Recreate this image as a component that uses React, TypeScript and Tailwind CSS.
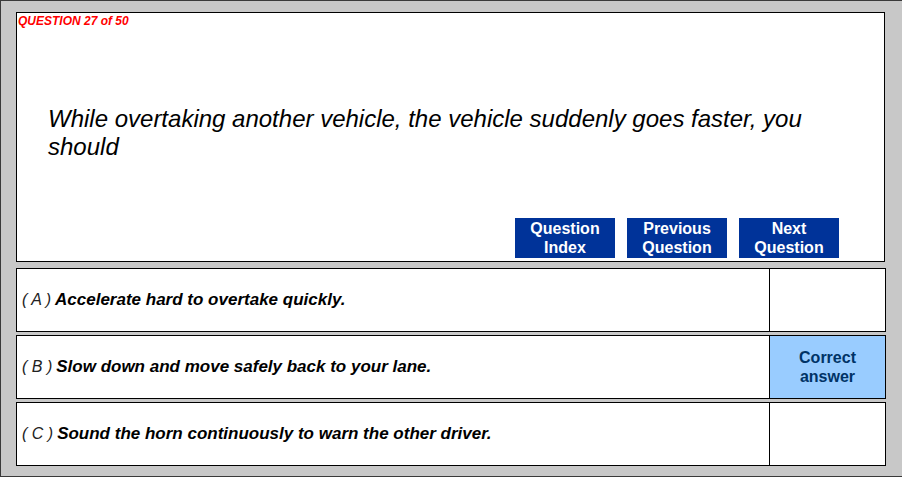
import React from 'react';

const options = [
  { key: 'A', text: 'Accelerate hard to overtake quickly.', correct: false },
  { key: 'B', text: 'Slow down and move safely back to your lane.', correct: true },
  { key: 'C', text: 'Sound the horn continuously to warn the other driver.', correct: false },
];

function NavButton({ top, bottom }: { top: string; bottom: string }) {
  return (
    <button
      type="button"
      className="w-[100px] h-[40px] bg-[#003399] text-white font-bold text-[16px] leading-[19px] flex flex-col items-center justify-center"
    >
      <span>{top}</span>
      <span>{bottom}</span>
    </button>
  );
}

export default function App() {
  return (
    <div
      className="w-[903px] h-[477px] bg-[#c8c8c8] border border-[#3a3a3a] pl-[15px] pt-[11px] flex flex-col"
      style={{ fontFamily: '"Liberation Sans", Arial, sans-serif' }}
    >
      <div className="w-[869px] h-[250px] bg-white border border-black flex flex-col">
        <div className="pl-[1px] pt-[1px] text-[12px] leading-[14px] font-bold italic text-[#ff0000]">
          QUESTION 27 of 50
        </div>
        <p className="mt-[77px] pl-[31px] pr-[60px] text-[24px] leading-[28px] italic text-black">
          While overtaking another vehicle, the vehicle suddenly goes faster, you should
        </p>
        <div className="mt-auto mb-[3px] flex justify-end gap-[12px] pr-[45px]">
          <NavButton top="Question" bottom="Index" />
          <NavButton top="Previous" bottom="Question" />
          <NavButton top="Next" bottom="Question" />
        </div>
      </div>

      <div className="mt-[6px] flex flex-col gap-[3px]">
        {options.map((o) => (
          <div key={o.key} className="w-[870px] h-[64px] bg-white border border-black flex">
            <div className="flex-1 flex items-center pl-[5px] text-[17px] italic text-black">
              <span className="font-light text-[#222] text-[16px]">( {o.key} )</span>
              <span className="ml-[4px] font-bold">{o.text}</span>
            </div>
            <div
              className={
                o.correct
                  ? 'w-[116px] border-l border-black bg-[#99ccff] flex flex-col items-center justify-center text-[16px] leading-[19px] font-bold text-[#003366]'
                  : 'w-[116px] border-l border-black'
              }
            >
              {o.correct && (
                <>
                  <span>Correct</span>
                  <span>answer</span>
                </>
              )}
            </div>
          </div>
        ))}
      </div>
    </div>
  );
}
